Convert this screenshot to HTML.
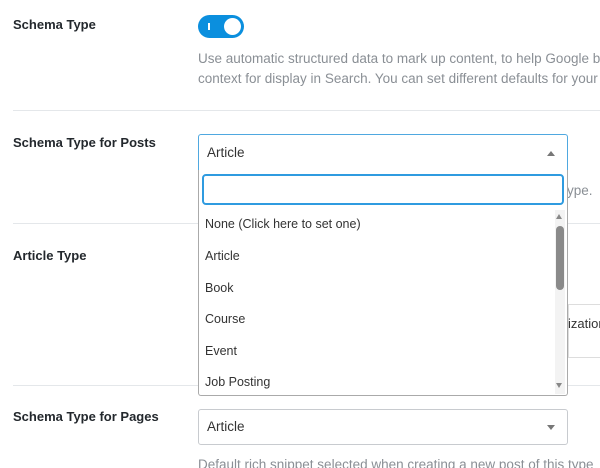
<!DOCTYPE html>
<html style="overflow:hidden;width:600px;height:468px"><head><style>
body{margin:0;width:600px;height:468px;overflow:hidden;background:#fff;font-family:"Liberation Sans",sans-serif;position:relative}
#w{position:absolute;left:0;top:0;width:600px;height:468px;overflow:hidden}
.a{position:absolute;white-space:nowrap}
.lbl{font-size:13px;font-weight:bold;color:#23282d;left:13px}
.desc{font-size:13.5px;color:#8a8f95;left:198px}
.hr{position:absolute;left:13px;right:0;height:1px;background:#e4e7ea}
.opt{position:absolute;left:6px;font-size:12.5px;color:#333}
</style></head><body><div id="w">
<div class="a lbl" style="top:17px">Schema Type</div>
<div class="a" style="left:198px;top:15px;width:46px;height:23px;border-radius:12px;background:#0b8fde"></div>
<div class="a" style="left:208px;top:23px;width:2px;height:7px;background:#fff"></div>
<div class="a" style="left:224px;top:18px;width:17px;height:17px;border-radius:50%;background:#fff"></div>
<div class="a desc" style="top:51px">Use automatic structured data to mark up content, to help Google better</div>
<div class="a desc" style="top:71px">context for display in Search. You can set different defaults for your posts</div>
<div class="hr" style="top:110px"></div>
<div class="a lbl" style="top:135px">Schema Type for Posts</div>
<div class="a desc" style="top:183px;left:567px">ype.</div>
<div class="hr" style="top:223px"></div>
<div class="a lbl" style="top:248px">Article Type</div>
<div class="a" style="left:568px;top:304px;width:32px;height:54px;border:1px solid #ddd;border-right:none;box-sizing:border-box"></div>
<div class="a" style="left:568px;top:316px;font-size:13px;color:#333">ization</div>
<div class="hr" style="top:385px"></div>
<div class="a lbl" style="top:409px">Schema Type for Pages</div>
<div class="a" style="left:198px;top:409px;width:370px;height:36px;border:1px solid #c8cbcf;border-radius:3px;box-sizing:border-box"></div>
<div class="a" style="left:207px;top:419px;font-size:13.5px;color:#333">Article</div>
<div class="a" style="left:547px;top:425px;width:0;height:0;border-left:4px solid transparent;border-right:4px solid transparent;border-top:5px solid #777"></div>
<div class="a desc" style="top:457px">Default rich snippet selected when creating a new post of this type</div>

<div class="a" style="left:198px;top:134px;width:370px;height:37px;border:1px solid #4fa8e0;border-bottom:none;border-radius:3px 3px 0 0;box-sizing:border-box;background:#fff"></div>
<div class="a" style="left:207px;top:145px;font-size:13.5px;color:#333">Article</div>
<div class="a" style="left:547px;top:151px;width:0;height:0;border-left:4px solid transparent;border-right:4px solid transparent;border-bottom:5px solid #777"></div>
<div class="a" style="left:198px;top:170px;width:370px;height:226px;border:1px solid #aaa;border-top:none;border-radius:0 0 3px 3px;box-sizing:border-box;background:#fff">
<div class="a" style="left:3px;top:4px;width:362px;height:31px;border:2px solid #2f9be0;border-radius:4px;box-sizing:border-box"></div>
<div class="opt" style="top:47px">None (Click here to set one)</div>
<div class="opt" style="top:79px">Article</div>
<div class="opt" style="top:111px">Book</div>
<div class="opt" style="top:142px">Course</div>
<div class="opt" style="top:174px">Event</div>
<div class="opt" style="top:205px">Job Posting</div>
<div class="a" style="left:356px;top:40px;width:10px;height:184px;background:#f3f3f3"></div>
<div class="a" style="left:357px;top:44px;width:0;height:0;border-left:3px solid transparent;border-right:3px solid transparent;border-bottom:5px solid #888"></div>
<div class="a" style="left:357px;top:213px;width:0;height:0;border-left:3px solid transparent;border-right:3px solid transparent;border-top:5px solid #888"></div>
<div class="a" style="left:357px;top:56px;width:8px;height:64px;border-radius:4px;background:#8a8a8a"></div>
</div>
</div></body></html>
